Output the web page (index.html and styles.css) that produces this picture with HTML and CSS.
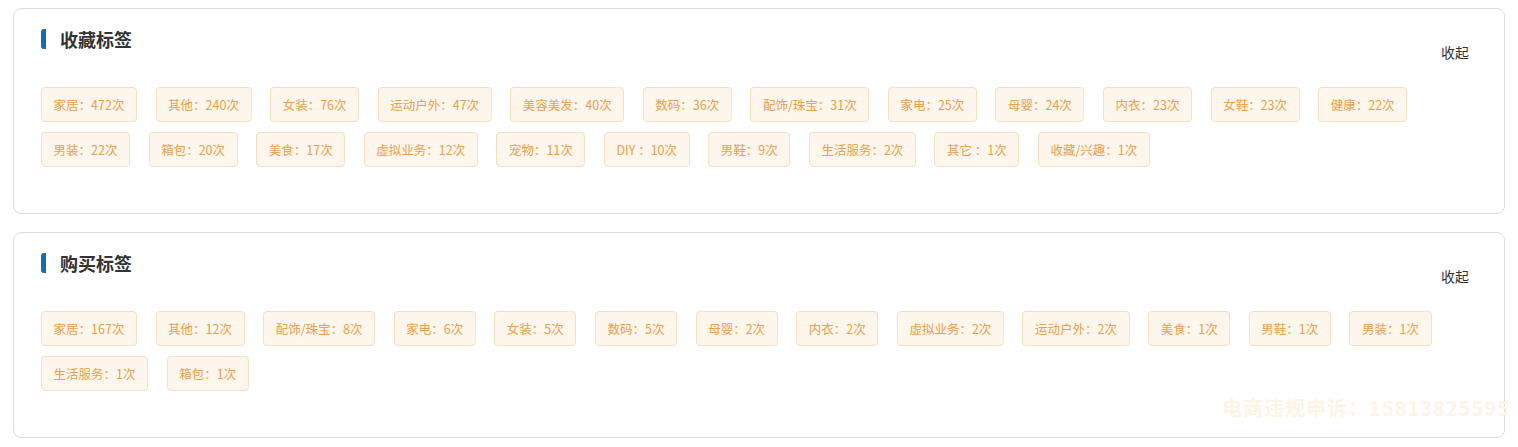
FILE: index.html
```html
<!DOCTYPE html>
<html lang="zh-CN">
<head>
    <meta charset="UTF-8">
    <meta name="viewport" content="width=device-width, initial-scale=1.0">
    <title>标签</title>
    <link rel="stylesheet" href="styles.css">
</head>
<body>
    <div class="page">
        <div class="card">
            <div class="card-head">
                <h2 class="card-title">收藏标签</h2>
                <span class="toggle">收起</span>
            </div>
            <div class="tags">
                <span class="tag">家居：472次</span>
                <span class="tag">其他：240次</span>
                <span class="tag">女装：76次</span>
                <span class="tag">运动户外：47次</span>
                <span class="tag">美容美发：40次</span>
                <span class="tag">数码：36次</span>
                <span class="tag">配饰/珠宝：31次</span>
                <span class="tag">家电：25次</span>
                <span class="tag">母婴：24次</span>
                <span class="tag">内衣：23次</span>
                <span class="tag">女鞋：23次</span>
                <span class="tag">健康：22次</span>
                <span class="tag">男装：22次</span>
                <span class="tag">箱包：20次</span>
                <span class="tag">美食：17次</span>
                <span class="tag">虚拟业务：12次</span>
                <span class="tag">宠物：11次</span>
                <span class="tag">DIY ：10次</span>
                <span class="tag">男鞋：9次</span>
                <span class="tag">生活服务：2次</span>
                <span class="tag">其它 ：1次</span>
                <span class="tag">收藏/兴趣：1次</span>
            </div>
        </div>

        <div class="card">
            <div class="card-head">
                <h2 class="card-title">购买标签</h2>
                <span class="toggle">收起</span>
            </div>
            <div class="tags">
                <span class="tag">家居：167次</span>
                <span class="tag">其他：12次</span>
                <span class="tag">配饰/珠宝：8次</span>
                <span class="tag">家电：6次</span>
                <span class="tag">女装：5次</span>
                <span class="tag">数码：5次</span>
                <span class="tag">母婴：2次</span>
                <span class="tag">内衣：2次</span>
                <span class="tag">虚拟业务：2次</span>
                <span class="tag">运动户外：2次</span>
                <span class="tag">美食：1次</span>
                <span class="tag">男鞋：1次</span>
                <span class="tag">男装：1次</span>
                <span class="tag">生活服务：1次</span>
                <span class="tag">箱包：1次</span>
            </div>
        </div>

        <div class="watermark">电商违规申诉：15813825595</div>
    </div>
</body>
</html>
```

FILE: styles.css
```css
html{
    font-family: "Noto Sans CJK SC", "Noto Sans", sans-serif;
}

body{
    margin: 0;
    background-color: #fff;
    color: #333;
}

.page{
    position: relative;
    padding: 8px 13px;
}

.card{
    border: 1px solid #dcdcdc;
    border-radius: 8px;
    padding: 20px 27px 46px;
    margin-bottom: 18px;
}

.card-head{
    display: flex;
    justify-content: space-between;
    align-items: flex-start;
}

.card-title{
    margin: 0;
    height: 20px;
    line-height: 20px;
    font-size: 18px;
    font-weight: bold;
    color: #333;
    border-left: 5px solid #0f6db9;
    border-radius: 3px 0 0 3px;
    padding-left: 14px;
}

.toggle{
    margin-top: 13px;
    margin-right: 8px;
    line-height: 20px;
    font-size: 14px;
    color: #333;
    cursor: pointer;
}

.tags{
    display: flex;
    flex-wrap: wrap;
    column-gap: 18.5px;
    row-gap: 10px;
    margin-top: 25px;
}

.tag{
    height: 33px;
    line-height: 33px;
    padding: 0 11.6px;
    font-size: 12.5px;
    color: #eba049;
    background-color: #fdf6ec;
    border: 1px solid #f8dfbd;
    border-radius: 4px;
    white-space: pre;
}

.watermark{
    position: absolute;
    left: 1222px;
    top: 393px;
    font-size: 20px;
    font-weight: bold;
    letter-spacing: 1px;
    color: #fdf4e6;
    white-space: nowrap;
    pointer-events: none;
}
```
